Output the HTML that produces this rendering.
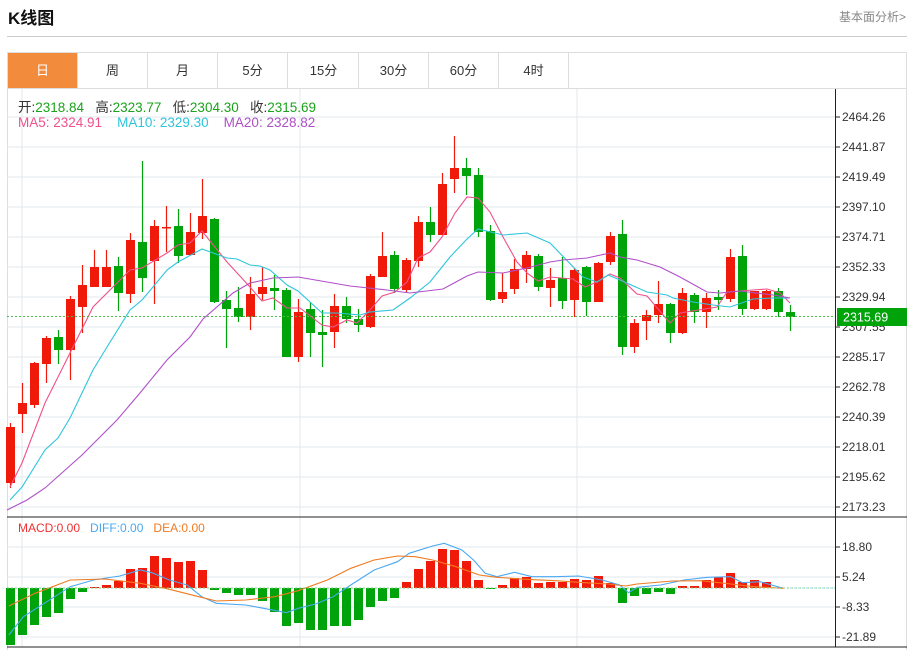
<!DOCTYPE html>
<html><head><meta charset="utf-8">
<style>
*{margin:0;padding:0;box-sizing:border-box}
body{width:912px;height:650px;background:#fff;font-family:"Liberation Sans","Noto Sans CJK SC",sans-serif;position:relative;overflow:hidden;color:#333}
.t{position:absolute;left:8px;top:4px;font-size:17px;font-weight:bold;color:#111}
.r{position:absolute;right:6px;top:8px;font-size:12px;color:#888}
.hr{position:absolute;left:7px;width:900px;top:36px;height:1px;background:#ccc}
.box{position:absolute;left:7px;top:52px;width:900px;height:598px;border:1px solid #ddd;border-bottom:none}
.tabs{position:absolute;left:7px;top:52px;height:37px;width:900px;border-bottom:1px solid #ddd}
.tab{position:absolute;top:1px;height:35px;width:70px;border-right:1px solid #ddd;text-align:center;line-height:35px;font-size:13px;color:#333}
.tab.a{background:#f28b3c;color:#fff}
svg{position:absolute;left:0;top:0}
.lg{position:absolute;font-size:13.5px;white-space:nowrap}
</style></head><body>
<div class="t">K线图</div>
<div class="r">基本面分析&gt;</div>
<div class="hr"></div>
<div class="box"></div>
<div class="tabs">
<div class="tab a" style="left:1px">日</div>
<div class="tab" style="left:71px">周</div>
<div class="tab" style="left:141px">月</div>
<div class="tab" style="left:211px">5分</div>
<div class="tab" style="left:282px">15分</div>
<div class="tab" style="left:352px">30分</div>
<div class="tab" style="left:422px">60分</div>
<div class="tab" style="left:492px">4时</div>
</div>
<svg id="s" width="912" height="650" xmlns="http://www.w3.org/2000/svg" font-family="Liberation Sans, sans-serif" font-size="12"></svg>
<div class="lg" style="left:18px;top:96px">开:<span style="color:#1aa31a">2318.84</span>&nbsp;&nbsp; 高:<span style="color:#1aa31a">2323.77</span>&nbsp;&nbsp; 低:<span style="color:#1aa31a">2304.30</span>&nbsp;&nbsp; 收:<span style="color:#1aa31a">2315.69</span></div>
<div class="lg" style="left:18px;top:115px"><span style="color:#f0508a">MA5: 2324.91</span>&nbsp;&nbsp;&nbsp; <span style="color:#2ec5db">MA10: 2329.30</span>&nbsp;&nbsp;&nbsp; <span style="color:#b04fc8">MA20: 2328.82</span></div>
<div class="lg" style="left:18px;top:521px;font-size:12px"><span style="color:#f03030">MACD:0.00</span>&nbsp;&nbsp; <span style="color:#4aa8f0">DIFF:0.00</span>&nbsp;&nbsp; <span style="color:#f07a20">DEA:0.00</span></div>
<script>
var s=document.getElementById('s'),h='';
var P=[[117,'2464.26'],[147,'2441.87'],[177,'2419.49'],[207,'2397.10'],[237,'2374.71'],[267,'2352.33'],[297,'2329.94'],[327,'2307.55'],[357,'2285.17'],[387,'2262.78'],[417,'2240.39'],[447,'2218.01'],[477,'2195.62'],[507,'2173.23']];
var M=[[547,'18.80'],[577,'5.24'],[607,'-8.33'],[637,'-21.89']];
P.concat(M).forEach(function(p){h+='<line x1="7" x2="835" y1="'+p[0]+'" y2="'+p[0]+'" stroke="#e3e9ef"/>';});
[22,300,577].forEach(function(x){h+='<line x1="'+x+'" x2="'+x+'" y1="89" y2="647" stroke="#e3e9ef"/>';});
var C=[['r',427,483,423,488],['r',403,414,383,433],['r',363,405,362,408],['r',338,364,336,383],['g',337,350,330,364],['r',299,350,296,380],['r',285,307,265,333],['r',267,287,250,287],['r',267,287,250,287],['g',266,293,257,311],['r',240,294,233,303],['g',242,278,161,292],['r',226,261,220,304],['r',227,228,206,252],['g',226,256,209,263],['r',232,255,213,255],['r',216,233,179,239],['g',219,302,218,303],['g',300,309,291,348],['g',308,317,287,322],['r',294,317,277,330],['r',287,294,267,300],['g',288,291,275,310],['g',290,357,288,357],['r',312,357,299,362],['g',309,333,302,357],['g',332,335,310,367],['r',306,332,294,348],['g',306,319,297,323],['g',319,325,309,332],['r',276,327,274,328],['r',256,277,232,277],['g',255,289,251,293],['r',260,290,258,292],['r',222,261,216,267],['g',222,235,207,242],['r',184,235,173,235],['r',168,179,136,193],['g',168,176,158,195],['g',175,232,168,237],['g',231,300,225,301],['r',292,299,273,303],['r',269,289,259,294],['r',255,269,251,283],['g',256,287,254,291],['r',280,288,268,307],['g',278,301,257,309],['r',270,300,268,317],['g',267,302,266,316],['r',263,302,262,302],['r',236,262,232,265],['g',234,347,220,355],['r',323,347,319,353],['r',315,321,310,340],['r',304,315,281,323],['g',304,333,303,343],['r',293,333,288,334],['g',295,312,293,323],['r',298,312,293,328],['g',297,300,290,310],['r',257,299,249,302],['g',256,309,245,315],['r',291,309,291,310],['r',291,309,290,310],['g',291,312,288,317],['g',312,317,305,331]];
C.forEach(function(c,i){var x=10.5+12*i,col=c[0]=='r'?'#f01a0a':'#00a30a';
h+='<line x1="'+x+'" x2="'+x+'" y1="'+c[3]+'" y2="'+c[4]+'" stroke="'+col+'" stroke-width="1.2"/>';
h+='<rect x="'+(x-4.5)+'" y="'+c[1]+'" width="9" height="'+Math.max(1.5,c[2]-c[1])+'" fill="'+col+'"/>';});
function pl(a,col){h+='<polyline fill="none" stroke="'+col+'" stroke-width="1.1" points="'+a.join(' ')+'"/>';}
pl([[10,487],[22,463],[45,403],[68,357],[93,307],[130,270],[142,268],[167,253],[178,245],[190,243],[202,231],[227,262],[250,287],[262,301],[273,298],[287,308],[300,308],[322,325],[333,327],[347,320],[357,323],[370,310],[382,296],[395,292],[407,282],[418,258],[430,252],[442,237],[455,213],[467,197],[478,198],[490,212],[503,237],[517,262],[527,273],[538,281],[550,277],[573,279],[585,287],[597,282],[610,274],[620,278],[637,294],[647,296],[670,323],[680,313],[717,307],[727,292],[753,290],[767,289],[780,293],[790,303]],'#f0508a');
pl([[10,500],[22,487],[45,450],[58,438],[70,418],[93,370],[107,347],[130,310],[142,300],[153,287],[167,270],[178,262],[202,249],[227,258],[237,259],[250,265],[260,266],[270,270],[287,285],[298,291],[322,313],[337,313],[360,315],[370,312],[393,310],[410,298],[430,282],[450,257],[467,239],[478,229],[503,235],[527,233],[550,243],[583,277],[597,282],[608,275],[620,280],[647,292],[667,295],[673,298],[693,302],[713,305],[730,307],[753,299],[773,298],[790,298]],'#2ec5db');
pl([[7,510],[27,500],[45,488],[82,455],[117,420],[140,393],[167,360],[190,337],[203,319],[233,293],[250,283],[273,278],[298,277],[327,282],[350,286],[387,290],[410,293],[443,289],[467,276],[478,272],[503,273],[527,268],[550,262],[563,260],[587,258],[610,253],[620,257],[637,260],[660,267],[680,277],[707,292],[720,293],[740,291],[773,295],[790,298]],'#b04fc8');
var B=[-57,-47,-37,-29,-25,-11,-4,1,3,7,19,20,32,30,26,27,18,-2,-5,-7,-7,-13,-24,-38,-35,-42,-42,-38,-38,-32,-19,-13,-10,6,19,27,39,38,27,8,-1,3,10,11,5,6,6,9,8,12,5,-15,-8,-6,-4,-6,2,2,8,11,15,6,8,6,0,0];
B.forEach(function(v,i){var x=10.5+12*i;if(!v)return;var col=v>0?'#f01a0a':'#00a30a';h+='<rect x="'+(x-4.5)+'" y="'+(v>0?588-v:588)+'" width="9" height="'+Math.abs(v)+'" fill="'+col+'"/>';});
function cv(a){return a.map(function(p){return [(p[0]/1.7105).toFixed(1),(p[1]/3+500).toFixed(1)];});}
pl(cv([[15,405],[40,350],[80,305],[120,260],[160,240],[205,228],[240,210],[260,218],[290,240],[320,255],[345,290],[370,310],[420,315],[460,328],[490,338],[510,325],[540,312],[570,290],[600,255],[640,210],[680,185],[700,160],[740,138],[760,130],[790,150],[810,180],[830,220],[850,230],[880,217],[910,230],[950,230],[990,228],[1030,240],[1060,255],[1075,278],[1090,262],[1130,255],[1170,240],[1210,232],[1250,230],[1270,248],[1300,245],[1340,265]]),'#4aa8f0');
pl(cv([[15,318],[60,280],[120,240],[180,237],[240,250],[290,268],[340,290],[370,303],[420,300],[470,290],[510,272],[560,240],[600,205],[640,180],[680,168],[710,170],[740,180],[780,200],[820,225],[850,232],[900,238],[950,242],[1000,248],[1040,252],[1070,258],[1090,252],[1150,243],[1200,242],[1250,252],[1290,260],[1340,265]]),'#f07a20');
h+='<line x1="7" x2="835" y1="588" y2="588" stroke="#7ccf7c" stroke-dasharray="2,2"/>';
h+='<line x1="790" x2="835" y1="588" y2="588" stroke="#8fd4f0" stroke-dasharray="2,2"/>';
h+='<line x1="7" x2="835" y1="316.5" y2="316.5" stroke="#4fb84f" stroke-dasharray="2,2"/>';
h+='<line x1="7" x2="907" y1="517" y2="517" stroke="#222"/><line x1="7" x2="907" y1="647" y2="647" stroke="#222"/>';
h+='<line x1="835.5" x2="835.5" y1="89" y2="647" stroke="#222"/>';
P.forEach(function(p){h+='<line x1="835" x2="840" y1="'+p[0]+'" y2="'+p[0]+'" stroke="#222"/><text x="842" y="'+(p[0]+4)+'" fill="#333">'+p[1]+'</text>';});
M.forEach(function(p){h+='<line x1="835" x2="840" y1="'+p[0]+'" y2="'+p[0]+'" stroke="#222"/><text x="842" y="'+(p[0]+4)+'" fill="#333">'+p[1]+'</text>';});
h+='<rect x="837" y="308" width="70" height="18" fill="#00a30a"/><text x="843" y="321.5" fill="#fff" font-size="12.5">2315.69</text>';
s.innerHTML=h;
</script>
</body></html>
